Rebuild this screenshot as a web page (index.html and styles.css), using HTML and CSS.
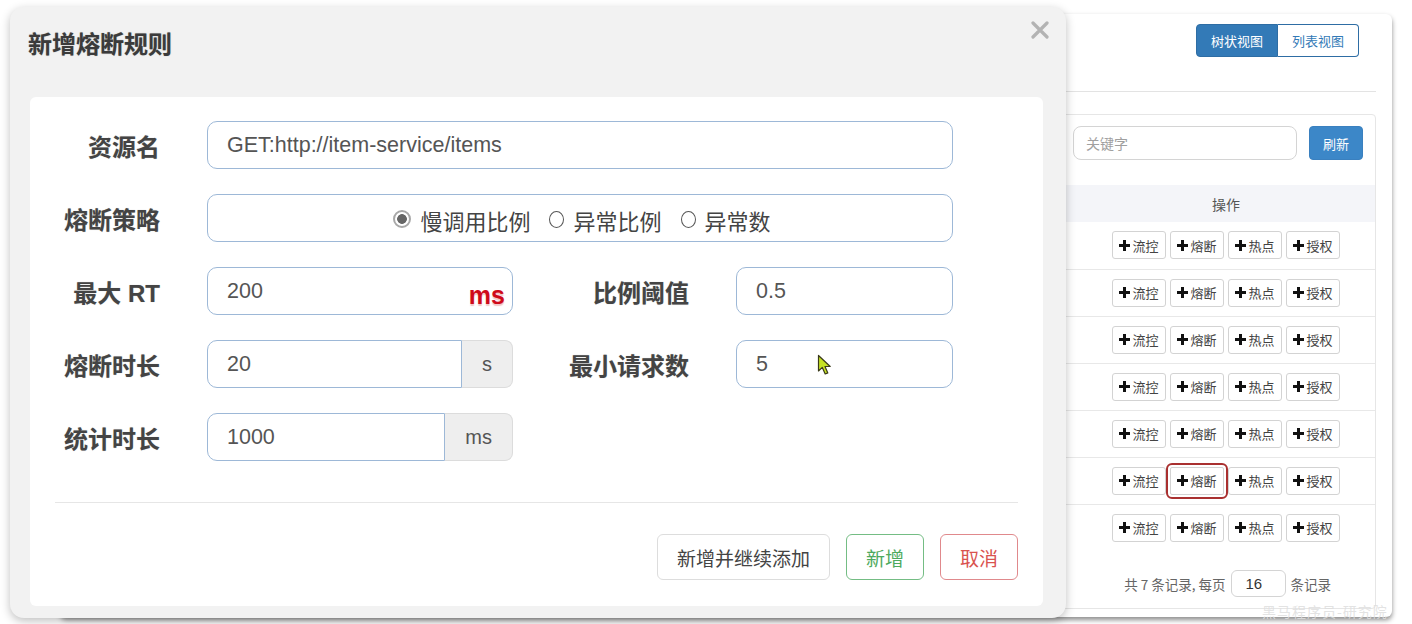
FILE: index.html
```html
<!DOCTYPE html>
<html lang="zh-CN">
<head>
    <meta charset="UTF-8">
    <meta name="viewport" content="width=device-width, initial-scale=1.0">
    <title>新增熔断规则</title>
    <link rel="stylesheet" href="styles.css">
</head>
<body>
    <div class="page">
        <!-- background: resource list card -->
        <div class="card">
            <div class="card-head">
                <div class="view-toggle">
                    <button class="active">树状视图</button>
                    <button>列表视图</button>
                </div>
            </div>
            <div class="panel">
                <div class="panel-tools">
                    <input class="search" placeholder="关键字">
                    <button class="btn-refresh">刷新</button>
                </div>
                <table class="res-table">
                    <thead>
                        <tr><th>资源名</th><th class="col-ops">操作</th></tr>
                    </thead>
                    <tbody id="resRows"></tbody>
                </table>
                <div class="pager">
                    <span>共 7 条记录, 每页</span>
                    <input class="page-size" value="16">
                    <span>条记录</span>
                </div>
            </div>
        </div>
        <div class="watermark">黑马程序员-研究院</div>

        <!-- modal -->
        <div class="modal">
            <div class="modal-head">
                <h3 class="modal-title">新增熔断规则</h3>
                <button class="modal-close" aria-label="关闭">
                    <svg width="18" height="18" viewBox="0 0 18 18"><path d="M2 2L16 16M16 2L2 16" stroke="#b3b3b3" stroke-width="3.2" stroke-linecap="round"/></svg>
                </button>
            </div>
            <div class="modal-body">
                <form class="rule-form">
                    <label class="lbl">资源名</label>
                    <input class="ctl span3" value="GET:http://item-service/items">

                    <label class="lbl">熔断策略</label>
                    <div class="radio-box span3">
                        <label class="radio-opt"><span class="radio checked"></span><span>慢调用比例</span></label>
                        <label class="radio-opt"><span class="radio"></span><span>异常比例</span></label>
                        <label class="radio-opt"><span class="radio"></span><span>异常数</span></label>
                    </div>

                    <label class="lbl">最大 RT</label>
                    <div class="rt-wrap">
                        <input class="ctl" value="200">
                        <span class="rt-unit">ms</span>
                    </div>
                    <label class="lbl">比例阈值</label>
                    <input class="ctl" value="0.5">

                    <label class="lbl">熔断时长</label>
                    <div class="input-group">
                        <input class="ctl" value="20">
                        <span class="addon">s</span>
                    </div>
                    <label class="lbl">最小请求数</label>
                    <input class="ctl" value="5">

                    <label class="lbl">统计时长</label>
                    <div class="input-group">
                        <input class="ctl" value="1000">
                        <span class="addon">ms</span>
                    </div>
                </form>
                <div class="divider"></div>
                <div class="modal-foot">
                    <button class="btn">新增并继续添加</button>
                    <button class="btn btn-green">新增</button>
                    <button class="btn btn-red">取消</button>
                </div>
            </div>
        </div>

        <svg class="cursor" width="16" height="22" viewBox="0 0 16 22"><path d="M1.5 1.5V17L5.3 13.4L8.2 20L10.8 18.9L8 12.5H13.2Z" fill="#c6e224" stroke="#3a3a1a" stroke-width="1.2" stroke-linejoin="round"/></svg>
    </div>

    <script>
        // Build resource rows
        const ops = ['流控', '熔断', '热点', '授权'];
        const plus = '<svg width="11" height="11" viewBox="0 0 11 11"><path d="M4 0h3v4h4v3H7v4H4V7H0V4h4z" fill="#111"/></svg>';
        const tbody = document.getElementById('resRows');
        for (let i = 0; i < 7; i++) {
            const tr = document.createElement('tr');
            const btns = ops.map((op, j) => {
                const focus = (i === 5 && j === 1) ? ' focused' : '';
                return `<button class="op${focus}">${plus}<span>${op}</span></button>`;
            }).join('');
            tr.innerHTML = `<td class="col-name">/items</td><td class="col-ops"><div class="op-group">${btns}</div></td>`;
            tbody.appendChild(tr);
        }
    </script>
</body>
</html>
```

FILE: styles.css
```css
* {
    box-sizing: border-box;
}

body {
    margin: 0;
    background: #fff;
    font-family: 'Liberation Sans', 'Noto Sans CJK SC', sans-serif;
    color: #333;
    overflow: hidden;
}

.page {
    position: relative;
    width: 1412px;
    height: 624px;
    padding-top: 14px;
}

/* ---------- background card ---------- */

.card {
    margin: 0 20px 0 60px;
    height: 603px;
    background: #fff;
    border-radius: 6px;
    box-shadow: 0 3px 5px rgba(0, 0, 0, 0.45);
    padding: 0 16px 0 20px;
    font-size: 13px;
}

.card-head {
    height: 78px;
    border-bottom: 1px solid #e3e3e3;
    display: flex;
    justify-content: flex-end;
    align-items: flex-start;
    padding: 10px 17px 0 0;
}

.view-toggle {
    display: flex;
}

.view-toggle button {
    height: 33px;
    padding: 0 14px;
    font: 13px 'Noto Sans CJK SC', sans-serif;
    border: 1px solid #2e6da4;
    background: #fff;
    color: #337ab7;
}

.view-toggle button:first-child {
    border-radius: 4px 0 0 4px;
}

.view-toggle button:last-child {
    border-radius: 0 4px 4px 0;
    border-left: 0;
}

.view-toggle button.active {
    background: #337ab7;
    color: #fff;
}

.panel {
    margin-top: 22px;
    height: 495px;
    border: 1px solid #e6e6e6;
    border-radius: 4px;
}

.panel-tools {
    height: 70px;
    display: flex;
    justify-content: flex-end;
    align-items: flex-start;
    gap: 12px;
    padding: 11px 12px 0 0;
}

.search {
    width: 224px;
    height: 34px;
    border: 1px solid #d4d4d4;
    border-radius: 8px;
    padding: 0 12px;
    font: 14px 'Noto Sans CJK SC', sans-serif;
}

.search::placeholder {
    color: #a0a0a0;
}

.btn-refresh {
    width: 54px;
    height: 34px;
    border: 1px solid #3a80bf;
    border-radius: 4px;
    background: #3c87c8;
    color: #fff;
    font: 13px 'Noto Sans CJK SC', sans-serif;
}

.res-table {
    width: 100%;
    border-collapse: collapse;
}

.res-table th {
    height: 37px;
    background: #f4f5f9;
    font-weight: normal;
    font-size: 14px;
    color: #555;
    font-family: 'Noto Sans CJK SC', sans-serif;
}

.res-table td {
    height: 47px;
    border-top: 1px solid #e8e8e8;
    text-align: center;
}

.res-table tbody tr:first-child td {
    border-top: 0;
}

.col-ops {
    width: 298px;
}

.op-group {
    display: flex;
    justify-content: center;
    gap: 4px;
}

.op {
    width: 54px;
    height: 28px;
    display: inline-flex;
    align-items: center;
    justify-content: center;
    gap: 2px;
    padding: 0;
    border: 1px solid #d3d3d3;
    border-radius: 3px;
    background: #fff;
    color: #444;
    font: 13px 'Noto Sans CJK SC', sans-serif;
}

.op.focused {
    outline: 2px solid #a93030;
    outline-offset: 2px;
    border-radius: 2px;
}

.pager {
    display: flex;
    justify-content: flex-end;
    align-items: center;
    gap: 5px;
    margin-top: 19px;
    padding-right: 44px;
    color: #666;
    font-size: 13.5px;
    font-family: 'Noto Sans CJK SC', sans-serif;
}

.page-size {
    width: 55px;
    height: 27px;
    border: 1px solid #d4d4d4;
    border-radius: 6px;
    padding-left: 14px;
    font: 15px 'Liberation Sans', sans-serif;
    color: #333;
}

.watermark {
    position: absolute;
    left: 1262px;
    top: 601px;
    font: 14px 'Noto Sans CJK SC', serif;
    color: rgba(222, 222, 222, 0.85);
    letter-spacing: 1px;
}

/* ---------- modal ---------- */

.modal {
    position: absolute;
    left: 10px;
    top: 7px;
    width: 1056px;
    height: 611px;
    background: #f2f2f2;
    border-radius: 14px;
    box-shadow: 0 3px 10px rgba(0, 0, 0, 0.25);
    padding: 0 23px 12px 20px;
    display: flex;
    flex-direction: column;
}

.modal-head {
    height: 90px;
    flex-shrink: 0;
}

.modal-title {
    margin: 0 0 0 -2px;
    padding-top: 24px;
    line-height: 28px;
    font-size: 24px;
    font-weight: bold;
    color: #3b3b3b;
    text-shadow: 0 0 1px rgba(0, 0, 0, 0.35);
}

.modal-close {
    position: absolute;
    top: 14px;
    right: 17px;
    width: 18px;
    height: 18px;
    padding: 0;
    border: 0;
    background: none;
}

.modal-body {
    flex: 1;
    background: #fff;
    border-radius: 6px;
    padding-top: 24px;
}

.rule-form {
    display: grid;
    grid-template-columns: 177px 306px 223px 217px;
    grid-auto-rows: 48px;
    row-gap: 25px;
    align-items: center;
}

.lbl {
    text-align: right;
    padding-right: 47px;
    font-size: 24px;
    font-weight: bold;
    color: #444;
    text-shadow: 0 0 1px rgba(0, 0, 0, 0.25);
    white-space: nowrap;
}

.span3 {
    grid-column: span 3;
}

.ctl {
    width: 100%;
    height: 48px;
    border: 1.5px solid #9db8d7;
    border-radius: 10px;
    padding: 0 19px;
    font: 21.5px 'Liberation Sans', sans-serif;
    color: #555;
    background: #fff;
}

.radio-box {
    height: 48px;
    border: 1.5px solid #9db8d7;
    border-radius: 10px;
    display: flex;
    justify-content: center;
    align-items: center;
    gap: 19px;
    padding: 4px 0 0 4px;
    font: 22px 'Noto Sans CJK SC', sans-serif;
    color: #444;
}

.radio-opt {
    display: flex;
    align-items: center;
    gap: 9px;
    line-height: 28px;
}

.radio {
    width: 15px;
    height: 17px;
    border: 1.5px solid #555;
    border-radius: 50%;
    margin-bottom: 2px;
    flex-shrink: 0;
}

.radio.checked {
    width: 18px;
    height: 18px;
    border: 2.5px solid #a8a8a8;
    background: radial-gradient(circle, #666 0 4.5px, #fff 5.2px);
}

.rt-wrap {
    position: relative;
}

.rt-unit {
    position: absolute;
    right: 8px;
    top: 14px;
    font: bold 25px 'Liberation Sans', sans-serif;
    color: #cf0a1a;
    text-shadow: 0 2px 1px rgba(230, 150, 150, 0.55);
}

.input-group {
    display: flex;
    height: 48px;
}

.input-group .ctl {
    flex: 1;
    border-radius: 10px 0 0 10px;
}

.addon {
    display: flex;
    align-items: center;
    padding: 0 20px;
    background: #eee;
    border: 1px solid #dcdcdc;
    border-left: 0;
    border-radius: 0 8px 8px 0;
    font: 20px 'Liberation Sans', sans-serif;
    color: #555;
}

.divider {
    margin: 41px 25px 0;
    border-top: 1px solid #e6e6e6;
}

.modal-foot {
    display: flex;
    justify-content: flex-end;
    gap: 16px;
    margin-top: 31px;
    padding-right: 25px;
}

.btn {
    height: 46px;
    padding: 0 19px;
    border: 1.5px solid #ddd;
    border-radius: 6px;
    background: #fff;
    color: #444;
    font: 19px 'Noto Sans CJK SC', sans-serif;
}

.btn-green {
    border-color: #74bd84;
    color: #4eaa5e;
}

.btn-red {
    border-color: #e0898c;
    color: #d9534f;
}

.cursor {
    position: absolute;
    left: 817px;
    top: 354px;
}
```
